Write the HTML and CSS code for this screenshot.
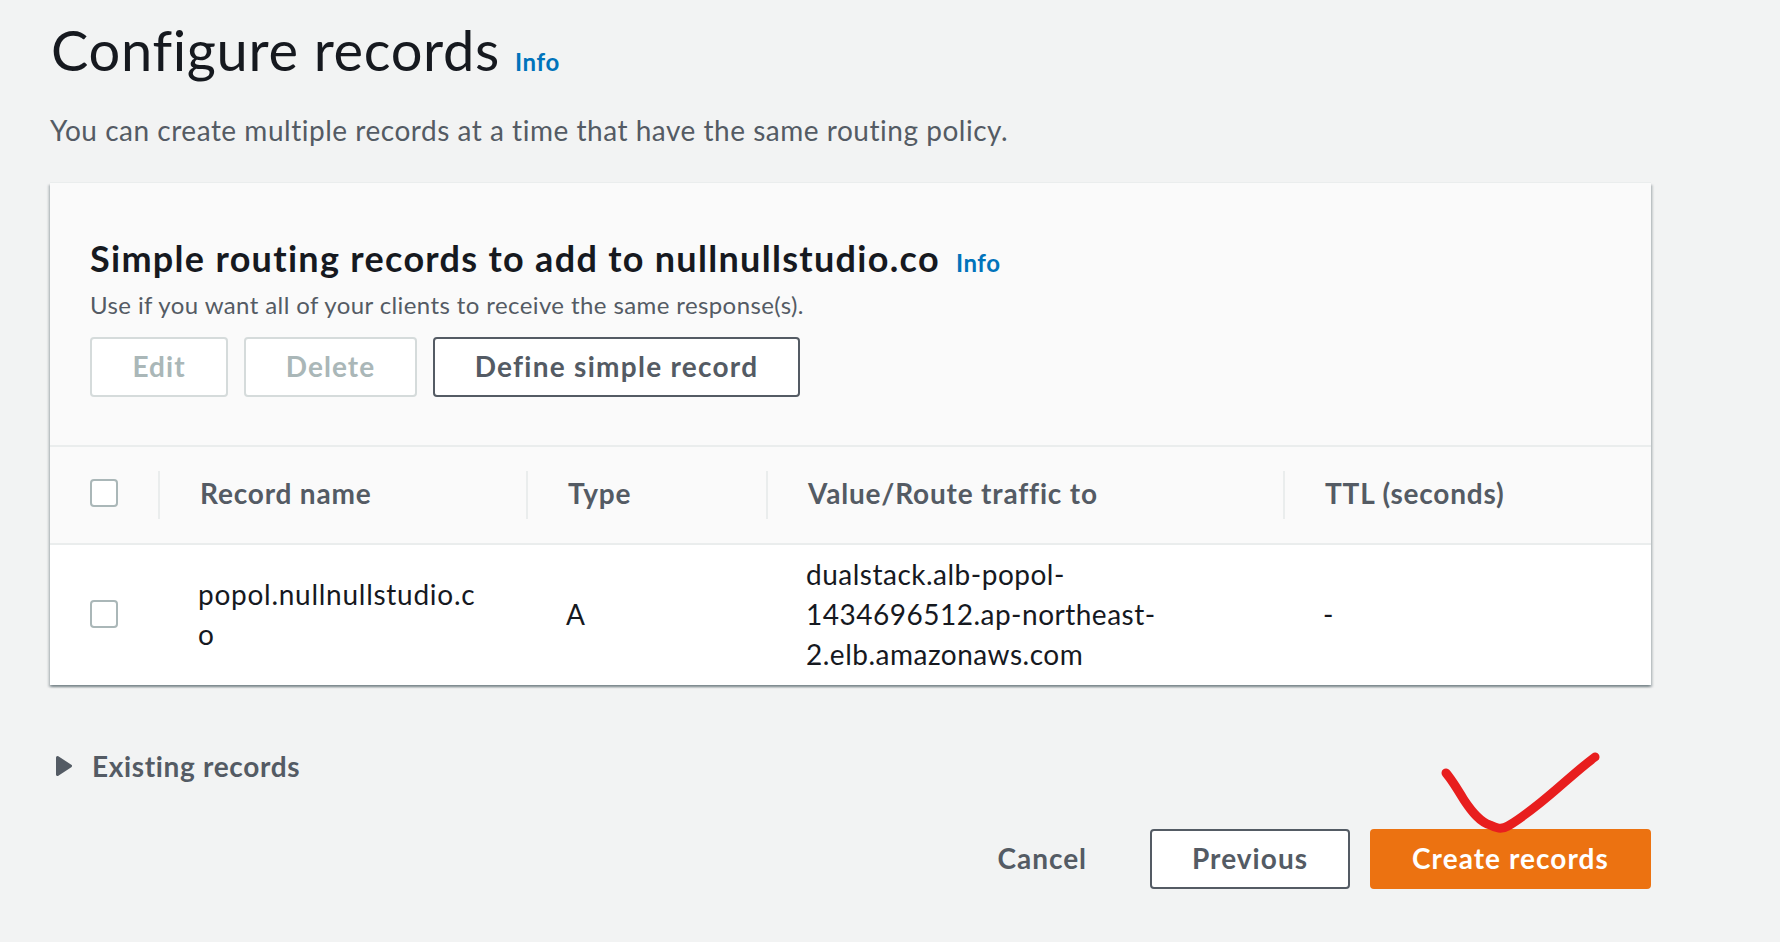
FILE: index.html
```html
<!DOCTYPE html>
<html>
<head>
  <title>Configure records</title>
  <link rel="stylesheet" href="styles.css">
</head>
<body>

  <div class="page">
    <div class="title-row">
      <h1>Configure records</h1>
      <a class="info info-big">Info</a>
    </div>
    <p class="desc">You can create multiple records at a time that have the same routing policy.</p>

    <div class="card">
      <div class="card-head">
        <div class="head-row">
          <h2>Simple routing records to add to nullnullstudio.co</h2>
          <a class="info">Info</a>
        </div>
        <p class="sub">Use if you want all of your clients to receive the same response(s).</p>
        <div class="btn-row">
          <button class="btn btn-edit" disabled>Edit</button>
          <button class="btn btn-delete" disabled>Delete</button>
          <button class="btn btn-define">Define simple record</button>
        </div>
      </div>

      <div class="table-row table-top">
        <div class="cell-check"><span class="checkbox"></span></div>
        <div class="th">Record name</div>
        <div class="th">Type</div>
        <div class="th">Value/Route traffic to</div>
        <div class="th">TTL (seconds)</div>
      </div>
      <div class="table-row table-body">
        <div class="cell-check"><span class="checkbox"></span></div>
        <div class="td td-name">popol.nullnullstudio.co</div>
        <div class="td">A</div>
        <div class="td td-value">dualstack.alb-popol-1434696512.ap-northeast-2.elb.amazonaws.com</div>
        <div class="td">-</div>
      </div>
    </div>

    <div class="existing">
      <svg class="caret" width="16" height="20" viewBox="0 0 16 20"><path d="M1.5 1.5 L14.5 10 L1.5 18.5 Z" fill="#545b64" stroke="#545b64" stroke-width="3" stroke-linejoin="round"/></svg>
      <span>Existing records</span>
    </div>

    <div class="actions">
      <button class="btn-cancel">Cancel</button>
      <button class="btn btn-previous">Previous</button>
      <button class="btn btn-create">Create records</button>
    </div>
  </div>

  <svg class="scribble" width="1780" height="942" viewBox="0 0 1780 942">
    <path d="M1446 773 C1452 780 1458 790 1464 800 C1472 812 1480 822 1490 825 C1496 828 1501 830 1508 826 C1520 819 1530 811 1540 803 C1558 789 1575 772 1595 757" fill="none" stroke="#e81e1e" stroke-width="9" stroke-linecap="round" stroke-linejoin="round"/>
  </svg>

</body>
</html>
```

FILE: styles.css
```css
body {
  background-color: #f2f3f3;
  color: #16191f;
  font-family: "Lato", "Noto Sans", sans-serif;
  margin: 0;
  height: 942px;
  overflow: hidden;
}

.page {
  width: 1601px;
  margin-left: 50px;
  padding-top: 10px;
}

.title-row {
  display: flex;
  align-items: baseline;
  gap: 15px;
  height: 80px;
  padding-left: 1px;
}

h1 {
  margin: 0;
  font-size: 56px;
  line-height: 80px;
  font-weight: 400;
  letter-spacing: 0.67px;
}

.info {
  color: #0073bb;
  font-size: 24px;
  font-weight: 700;
  letter-spacing: 0.6px;
}

.desc {
  margin: 20px 0 0;
  font-size: 28px;
  line-height: 40px;
  color: #545b64;
  letter-spacing: 0.52px;
}

.card {
  margin-top: 33px;
  background-color: #fff;
  box-shadow: 0 2px 2px 0 rgba(0, 28, 36, 0.3), 2px 2px 2px 0 rgba(0, 28, 36, 0.15), -2px 2px 2px 0 rgba(0, 28, 36, 0.15), 0 -1px 0 0 #eaeded;
}

.card-head {
  background-color: #fafafa;
  height: 264px;
  padding: 53px 40px 0;
  box-sizing: border-box;
  border-bottom: 2px solid #eaeded;
}

.head-row {
  display: flex;
  align-items: baseline;
  gap: 16px;
}

h2 {
  margin: 0;
  font-size: 36px;
  line-height: 44px;
  font-weight: 700;
  letter-spacing: 1.3px;
}

.sub {
  margin: 5px 0 0;
  font-size: 24px;
  line-height: 40px;
  color: #545b64;
  letter-spacing: 0.4px;
}

.btn-row {
  display: flex;
  gap: 16px;
  margin-top: 12px;
}

.btn {
  height: 60px;
  box-sizing: border-box;
  border-radius: 4px;
  border: 2px solid #545b64;
  background-color: #fff;
  color: #545b64;
  font-family: inherit;
  font-size: 28px;
  font-weight: 700;
  letter-spacing: 1.05px;
  padding: 0 0 2px;
}

.btn-edit, .btn-delete {
  border-color: #d5dbdb;
  color: #aab7b8;
}

.btn-edit { width: 138px; }
.btn-delete { width: 173px; }
.btn-define { width: 367px; letter-spacing: 1.27px; }

.table-row {
  display: grid;
  grid-template-columns: 108px 368px 240px 517px 1fr;
}

.table-top {
  height: 96px;
  align-items: center;
  background-color: #fafafa;
  border-bottom: 2px solid #eaeded;
}

.table-top .checkbox {
  margin-bottom: 4px;
}

.cell-check {
  padding-left: 40px;
  display: flex;
  align-items: center;
}

.checkbox {
  display: block;
  width: 28px;
  height: 28px;
  box-sizing: border-box;
  border: 2px solid #aab7b8;
  border-radius: 4px;
  background-color: #fff;
}

.th {
  height: 48px;
  line-height: 44px;
  padding-left: 40px;
  border-left: 2px solid #eaeded;
  box-sizing: border-box;
  font-size: 28px;
  font-weight: 700;
  color: #545b64;
  letter-spacing: 0.82px;
}

.table-body {
  height: 140px;
  box-sizing: border-box;
  padding-bottom: 2px;
  align-items: center;
  background-color: #fff;
}

.td {
  padding-left: 40px;
  font-size: 28px;
  line-height: 40px;
  color: #16191f;
  letter-spacing: 0.5px;
}

.td-name {
  width: 290px;
  letter-spacing: 0.73px;
  overflow-wrap: anywhere;
}

.td-value {
  width: 350px;
}

.existing {
  display: flex;
  align-items: center;
  gap: 20px;
  margin-top: 61px;
  padding-left: 6px;
  height: 40px;
  font-size: 28px;
  font-weight: 700;
  color: #545b64;
  letter-spacing: 0.66px;
}

.actions {
  display: flex;
  justify-content: flex-end;
  align-items: center;
  gap: 20px;
  margin-top: 43px;
}

.btn-cancel {
  background: none;
  border: none;
  padding: 0 43px 2px 0;
  font-family: inherit;
  font-size: 28px;
  font-weight: 700;
  color: #545b64;
  letter-spacing: 0.95px;
}

.btn-previous { width: 200px; }

.btn-create {
  width: 281px;
  background-color: #ec7211;
  border-color: #ec7211;
  color: #fff;
}

.scribble {
  position: absolute;
  left: 0;
  top: 0;
  pointer-events: none;
}
```
